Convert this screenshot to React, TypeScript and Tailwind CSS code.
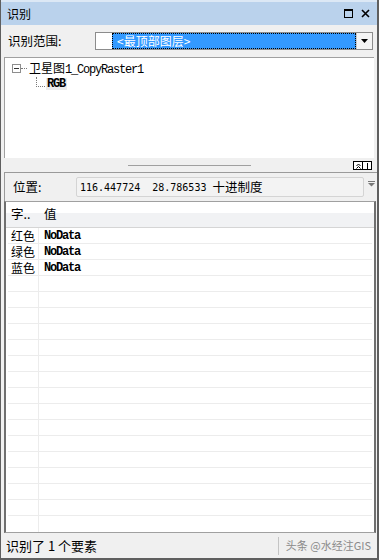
import React from 'react';

const cjk = '"Noto Sans CJK SC", "Liberation Sans", sans-serif';
const mono = '"DejaVu Sans Mono", "Liberation Mono", "Noto Sans CJK SC", monospace';
const courier = '"Liberation Mono", "DejaVu Sans Mono", "Noto Sans CJK SC", monospace';

const rows = [
    { name: '红色', value: 'NoData' },
    { name: '绿色', value: 'NoData' },
    { name: '蓝色', value: 'NoData' },
];

const TitleIcons: React.FC = () => (
    <div className="flex items-center gap-[8px] pr-[7px]">
        <svg width="9" height="9" viewBox="0 0 9 9">
            <rect x="0.5" y="0.5" width="8" height="8" fill="none" stroke="#000" />
            <rect x="0" y="0" width="9" height="2" fill="#000" />
        </svg>
        <svg width="9" height="9" viewBox="0 0 9 9">
            <path d="M1 1 L8 8 M8 1 L1 8" stroke="#000" strokeWidth="1.6" />
        </svg>
    </div>
);

const App: React.FC = () => {
    const emptyRows = Array.from({ length: 19 - rows.length });

    return (
        <div
            className="w-[379px] h-[560px] flex flex-col bg-[#f0f0f0] border-l border-r-2 border-b-2 border-[#5f5f5f] overflow-hidden text-[12px] text-black"
            style={{ fontFamily: cjk }}
        >
            {/* title bar */}
            <div className="h-[25px] shrink-0 flex items-center justify-between bg-[#bad2ec] border-t-2 border-[#dce8f5]">
                <span className="pl-[6px] text-[12px] leading-none">识别</span>
                <TitleIcons />
            </div>

            {/* scope row */}
            <div className="h-[32px] shrink-0 flex items-center pl-[7px] pr-[4px]">
                <span className="text-[12.5px] leading-none">识别范围:</span>
                <div className="ml-auto w-[278px] h-[18px] flex border border-[#8c8c8c] bg-white">
                    <div className="w-[16px] h-full bg-white" />
                    <div className="flex-1 h-full bg-[#3399ff] border border-dotted border-black flex items-center pl-[4px] text-white text-[12px] leading-none">
                        &lt;最顶部图层&gt;
                    </div>
                    <div className="w-[16px] h-full flex items-center justify-center bg-[#f4f4f4] border-l border-[#c8c8c8]">
                        <svg width="7" height="4" viewBox="0 0 7 4">
                            <path d="M0 0 H7 L3.5 4 Z" fill="#000" />
                        </svg>
                    </div>
                </div>
            </div>

            {/* tree panel */}
            <div className="h-[101px] shrink-0 ml-[3px] mr-[3px] bg-white border-l border-t border-[#a0a0a0] pt-[4px]">
                <div className="flex items-center h-[13px] pl-[7px]">
                    <div className="w-[9px] h-[9px] border border-[#8e8e8e] flex items-center justify-center bg-white">
                        <div className="w-[5px] h-px bg-[#333]" />
                    </div>
                    <div className="w-[6px] border-t border-dotted border-[#7a7a7a]" />
                    <span className="ml-[2px] leading-none text-[12px] whitespace-pre">
                        卫星图
                        <span className="text-[12px] tracking-[-1.2px]" style={{ fontFamily: courier }}>
                            1_CopyRaster1
                        </span>
                    </span>
                </div>
                <div className="flex items-end h-[14px] pl-[31px] mt-[1px]">
                    <div className="w-[9px] h-[10px] mb-[3px] border-l border-b border-dotted border-[#7a7a7a]" />
                    <span
                        className="ml-[1px] pl-[1px] pr-[2px] bg-[#ececec] text-[12px] tracking-[-1.2px] font-semibold leading-[12px]"
                        style={{ fontFamily: courier }}
                    >
                        RGB
                    </span>
                </div>
            </div>

            {/* splitter */}
            <div className="h-[14px] shrink-0 flex items-center relative">
                <div className="mx-auto w-[123px] h-px bg-[#a0a0a0]" />
                <div className="absolute right-[5px] top-[3px] flex">
                    <div className="w-[10px] h-[9px] border border-black bg-white flex items-center justify-center">
                        <svg width="5" height="6" viewBox="0 0 5 6">
                            <path d="M0.5 3 L2.5 1 L4.5 3 M0.5 5.5 L2.5 3.5 L4.5 5.5" stroke="#000" fill="none" />
                        </svg>
                    </div>
                    <div className="w-[9px] h-[9px] border border-black border-l-0 bg-white flex items-center justify-center">
                        <div className="w-px h-[6px] bg-black" />
                    </div>
                </div>
            </div>

            {/* location row */}
            <div className="h-[29px] shrink-0 ml-[3px] border-l border-t border-[#9a9a9a] flex items-center">
                <span className="pl-[8px] w-[71px] text-[12.5px] leading-none">位置:</span>
                <div className="w-[288px] h-[20px] border border-[#d4d4d4] rounded-[2px] bg-[#f3f3f3] flex items-center pl-[3px] whitespace-pre">
                    <span className="text-[10px]" style={{ fontFamily: mono }}>
                        116.447724  28.786533{' '}
                    </span>
                    <span className="text-[12.5px] leading-none">十进制度</span>
                </div>
                <svg width="7" height="6" viewBox="0 0 7 6" className="ml-[4px] -mt-[6px]">
                    <rect x="0" y="0" width="7" height="1" fill="#777" />
                    <path d="M0 2 H7 L3.5 5.5 Z" fill="#777" />
                </svg>
            </div>

            {/* grid */}
            <div className="h-[332px] shrink-0 ml-[3px] mr-[1px] bg-white border-t border-[#a0a0a0] border-l-2 border-l-[#6f6f6f] border-r-2 border-r-[#6f6f6f] border-b border-b-[#a0a0a0] flex flex-col">
                <div className="h-[26px] shrink-0 flex border-b border-[#d5d5d5] bg-[linear-gradient(to_bottom,#ffffff_0%,#ffffff_42%,#f1f2f4_43%,#f1f2f4_100%)]">
                    <div className="w-[33px] pl-[5px] flex items-center text-[12.5px] leading-none">字..</div>
                    <div className="flex-1 pl-[5px] flex items-center text-[12.5px] leading-none">值</div>
                </div>
                {rows.map((r) => (
                    <div key={r.name} className="h-[16px] shrink-0 flex border-b border-[#ececec] ml-[2px] mr-[2px]">
                        <div className="w-[31px] pl-[3px] border-r border-[#ececec] flex items-center text-[12px] leading-[14px]">
                            {r.name}
                        </div>
                        <div
                            className="flex-1 pl-[5px] flex items-center text-[12px] tracking-[-1.2px] font-semibold leading-[14px]"
                            style={{ fontFamily: courier }}
                        >
                            {r.value}
                        </div>
                    </div>
                ))}
                {emptyRows.map((_, i) => (
                    <div key={i} className="h-[16px] shrink-0 flex border-b border-[#ececec] ml-[2px] mr-[2px] last:border-b-0">
                        <div className="w-[31px] border-r border-[#ececec]" />
                        <div className="flex-1" />
                    </div>
                ))}
            </div>

            {/* status bar */}
            <div className="flex-1 flex items-center">
                <span className="pl-[5px] text-[13px] leading-none">识别了 1 个要素</span>
                <div className="ml-auto h-[18px] border-l border-[#c4c4c4] pl-[7px] pr-[6px] flex items-center text-[11px] text-[#8a8a8a] leading-none">
                    头条 @水经注GIS
                </div>
            </div>
        </div>
    );
};

export default App;
